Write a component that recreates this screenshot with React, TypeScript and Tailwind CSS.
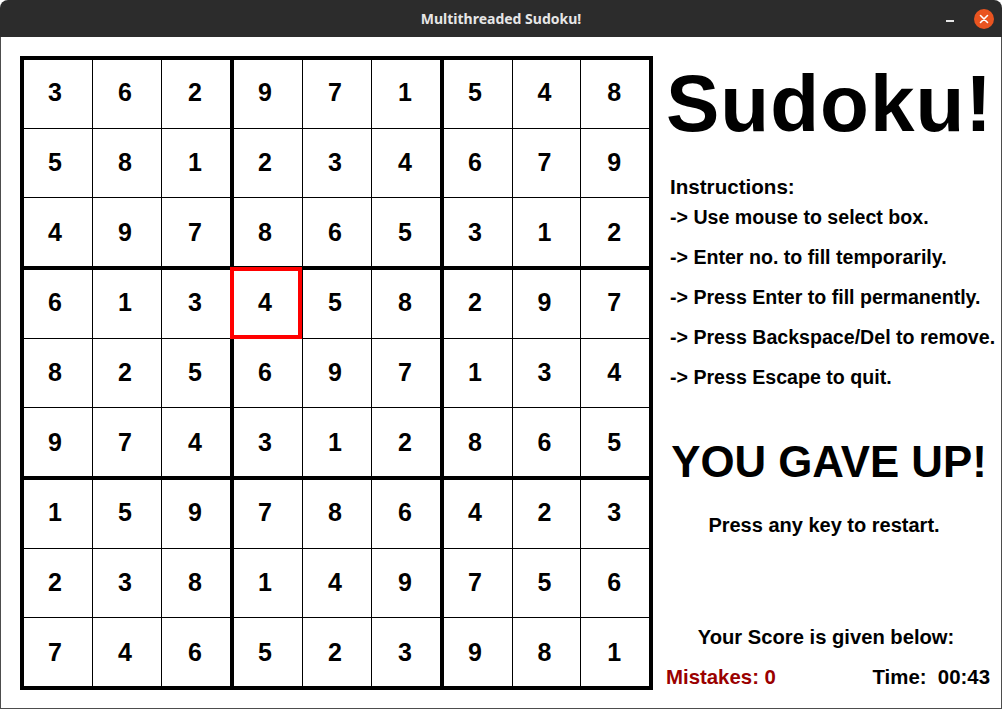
const board: number[][] = [
  [3, 6, 2, 9, 7, 1, 5, 4, 8],
  [5, 8, 1, 2, 3, 4, 6, 7, 9],
  [4, 9, 7, 8, 6, 5, 3, 1, 2],
  [6, 1, 3, 4, 5, 8, 2, 9, 7],
  [8, 2, 5, 6, 9, 7, 1, 3, 4],
  [9, 7, 4, 3, 1, 2, 8, 6, 5],
  [1, 5, 9, 7, 8, 6, 4, 2, 3],
  [2, 3, 8, 1, 4, 9, 7, 5, 6],
  [7, 4, 6, 5, 2, 3, 9, 8, 1],
];

const instructions = [
  "-> Use mouse to select box.",
  "-> Enter no. to fill temporarily.",
  "-> Press Enter to fill permanently.",
  "-> Press Backspace/Del to remove.",
  "-> Press Escape to quit.",
];

// nudges so digits sit on a 70px pitch like the original
const colPad = ["pr-[6px]", "pr-[4px]", "pr-[2px]"];
const rowPad = ["pb-[4px]", "pb-[2px]", "pb-0"];

const sans = { fontFamily: '"Liberation Sans", Arial, sans-serif' };

function TitleBar() {
  return (
    <div className="relative flex h-[37px] shrink-0 items-center justify-center rounded-t-[8px] bg-[#2c2c2c]">
      <span
        className="text-[14px] font-bold text-[#e6e6e6]"
        style={{ fontFamily: '"Noto Sans", "DejaVu Sans", sans-serif' }}
      >
        Multithreaded Sudoku!
      </span>

      <div className="absolute right-[8px] top-0 flex h-[37px] items-center gap-[20px]">
        <div className="mt-[4px] h-[2px] w-[8px] bg-[#e6e6e6]" />
        <div className="flex h-[20px] w-[20px] items-center justify-center rounded-full bg-[#e95420]">
          <svg width="10" height="10" viewBox="0 0 10 10">
            <path d="M1.5 1.5 L8.5 8.5 M8.5 1.5 L1.5 8.5" stroke="#fff" strokeWidth="1.6" strokeLinecap="round" />
          </svg>
        </div>
      </div>
    </div>
  );
}

function Block({ br, bc }: { br: number; bc: number }) {
  return (
    <div className="grid grid-cols-3 grid-rows-3 gap-px bg-black">
      {[0, 1, 2].map((r) =>
        [0, 1, 2].map((c) => (
          <div
            key={`${r}-${c}`}
            className={`flex items-center justify-center bg-white text-[25px] font-bold leading-none text-black ${colPad[c]} ${rowPad[r]}`}
          >
            {board[br * 3 + r][bc * 3 + c]}
          </div>
        ))
      )}
    </div>
  );
}

function Grid() {
  return (
    <div className="relative box-border h-[634px] w-[633px] border-4 border-black">
      <div className="grid h-full w-full grid-cols-[206px_206px_205px] grid-rows-[206px_206px_206px] gap-[4px] bg-black">
        {[0, 1, 2].map((br) =>
          [0, 1, 2].map((bc) => <Block key={`${br}-${bc}`} br={br} bc={bc} />)
        )}
      </div>

      {/* selected box */}
      <div className="absolute left-[206px] top-[207px] box-border h-[72px] w-[72px] border-[4px] border-[#ff0000]" />
    </div>
  );
}

function SidePanel() {
  return (
    <div className="flex flex-1 flex-col text-black">
      <div className="mt-[27px] pl-[13px] text-[80px] font-bold leading-[80px] tracking-[1px]">
        Sudoku!
      </div>

      <div className="mt-[31px] pl-[17px] text-[20.6px] font-bold leading-[24px]">
        Instructions:
      </div>

      <div className="-mt-[2px] flex flex-col pl-[17px]">
        {instructions.map((line) => (
          <div key={line} className="h-[40px] whitespace-nowrap text-[19.6px] font-bold leading-[40px]">
            {line}
          </div>
        ))}
      </div>

      <div className="mt-[40px] pl-[4px] text-center text-[43.8px] font-bold leading-[50px]">
        YOU GAVE UP!
      </div>

      <div className="mt-[26px] pr-[6px] text-center text-[20px] font-bold leading-[24px]">
        Press any key to restart.
      </div>

      <div className="mt-[88px] pr-[2px] text-center text-[20.2px] font-bold leading-[24px]">
        Your Score is given below:
      </div>

      <div className="mt-[16px] flex items-center justify-between pl-[13px] pr-[11px] text-[20.4px] font-bold leading-[24px]">
        <span className="text-[#9a0000]">Mistakes: 0</span>
        <span className="whitespace-pre">Time:  00:43</span>
      </div>
    </div>
  );
}

export default function App() {
  return (
    <div className="flex h-[709px] w-[1002px] flex-col bg-white" style={sans}>
      <TitleBar />

      <div className="flex flex-1 border-x border-b border-[#4d4d4d] bg-white">
        <div className="pl-[19px] pt-[19px]">
          <Grid />
        </div>
        <SidePanel />
      </div>
    </div>
  );
}
